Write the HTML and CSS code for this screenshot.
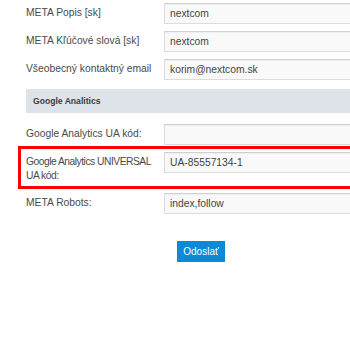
FILE: index.html
```html
<!DOCTYPE html>
<html lang="sk">
<head>
    <meta charset="UTF-8">
    <meta name="viewport" content="width=device-width, initial-scale=1.0">
    <title>Nastavenia</title>
    <link rel="stylesheet" href="styles.css">
</head>
<body>
    <form class="settings">
        <div class="row">
            <label class="row-label">META Popis [sk]</label>
            <input class="field" type="text" value="nextcom">
        </div>
        <div class="row">
            <label class="row-label">META Kľúčové slová [sk]</label>
            <input class="field" type="text" value="nextcom">
        </div>
        <div class="row">
            <label class="row-label">Všeobecný kontaktný email</label>
            <input class="field" type="text" value="korim@nextcom.sk">
        </div>

        <div class="section">Google Analitics</div>

        <div class="row">
            <label class="row-label">Google Analytics UA kód:</label>
            <input class="field" type="text" value="">
        </div>
        <!-- zvýraznený riadok -->
        <div class="row row-marked">
            <label class="row-label">Google Analytics UNIVERSAL<br>UA kód:</label>
            <input class="field" type="text" value="UA-85557134-1">
        </div>
        <div class="row row-last">
            <label class="row-label">META Robots:</label>
            <input class="field" type="text" value="index,follow">
        </div>

        <div class="actions">
            <button class="submit" type="button">Odoslať</button>
        </div>
    </form>
</body>
</html>
```

FILE: styles.css
```css
html, body { margin: 0; padding: 0; background: #fff; overflow: hidden; }
*, *::before, *::after { box-sizing: border-box; }
body { font-family: 'Liberation Sans', Arial, sans-serif; font-size: 10px; color: #444; }

.settings { width: 350px; margin-left: 26px; }

.row { display: grid; grid-template-columns: 138px 1fr; align-items: start; height: 28px; padding-top: 3px; }
.row-label { padding-top: 3px; line-height: 14px; font-size: 10.3px; color: #4a4a4a; white-space: nowrap; }
.field {
    height: 21px; width: 100%;
    padding: 0 5px;
    font-family: 'Liberation Sans', Arial, sans-serif; font-size: 10.3px; color: #444;
    background: #f9f9f9;
    border: 1px solid #dcdcdc; border-top-color: #d0d0d0;
    box-shadow: inset 0 1px 1px rgba(0, 0, 0, 0.04);
    border-radius: 0;
    outline: none;
}

.section {
    margin: 5px 0 8px;
    height: 24px; line-height: 24px;
    padding-left: 7px;
    background: #dde3e9;
    font-size: 8.6px; font-weight: bold; color: #3c3c3c;
}

.row-marked { height: 37px; margin-left: -5px; padding-left: 5px; outline: 3px solid #f00; }
.row-marked .row-label { letter-spacing: -0.5px; }
.row-last { margin-top: 4px; }

.actions { display: flex; justify-content: center; margin-top: 23px; }
.submit {
    height: 21px; padding: 0 6px;
    background: #0c8ad3; color: #fff;
    border: none; border-radius: 0;
    font-family: 'Liberation Sans', Arial, sans-serif; font-size: 10px;
}
```
